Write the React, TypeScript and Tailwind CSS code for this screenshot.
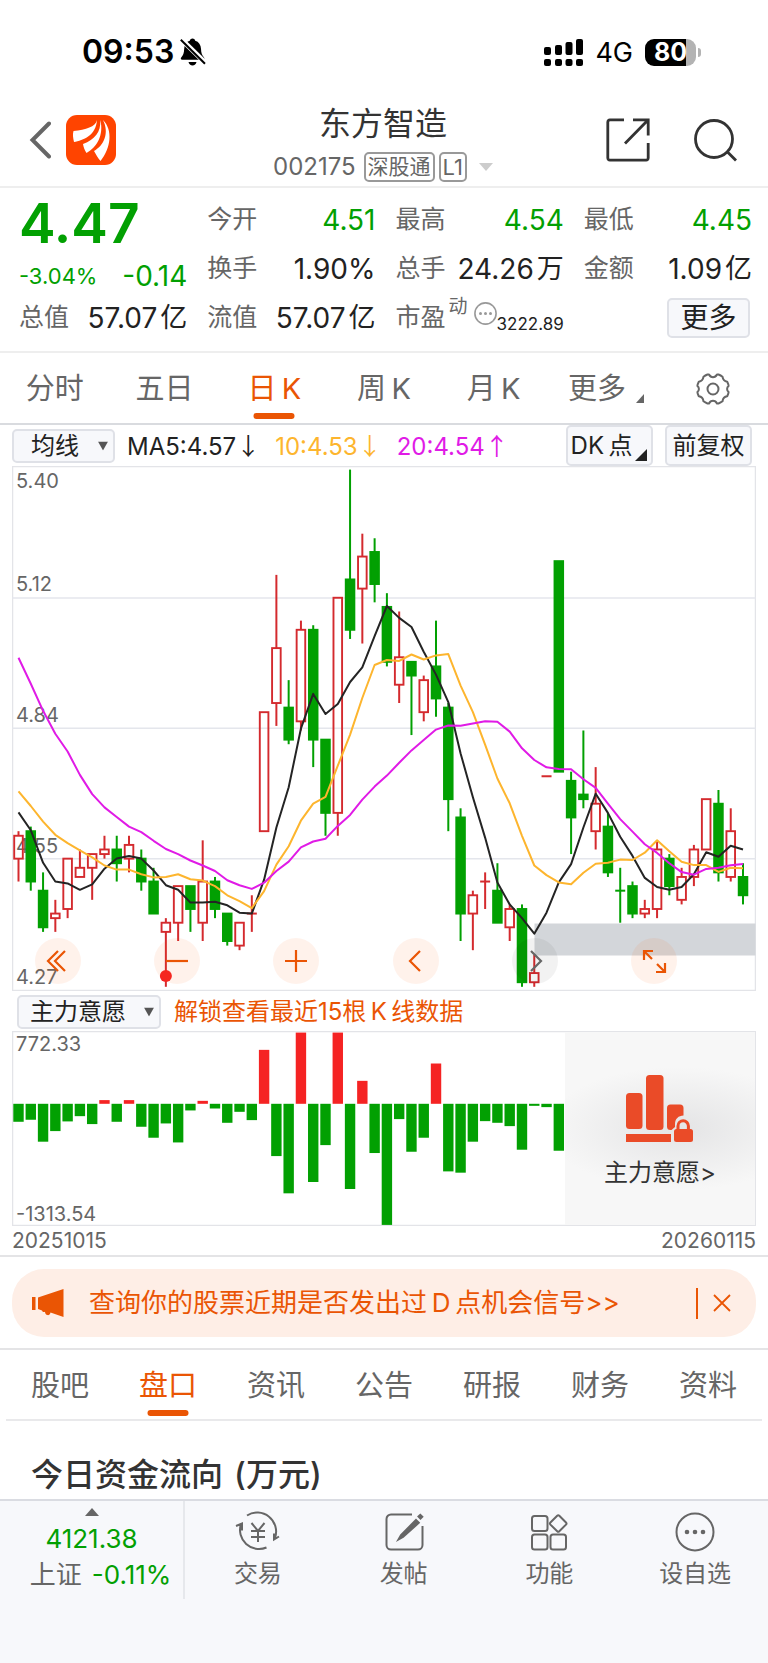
import React from "react";

type Candle = [up: boolean, high: number, top: number, bottom: number, low: number];

const R = true;
const G = false;

/* Prices in cents: direction, high, body top, body bottom, low */
const candles: Candle[] = [
  [R, 461, 460, 455, 450], [G, 462, 461, 450, 448], [G, 452, 448, 440, 439], [R, 446, 443, 442, 439],
  [R, 455, 455, 444, 442], [R, 457, 453, 451, 451], [R, 456, 456, 453, 446], [R, 460, 457, 456, 455],
  [G, 460, 457, 454, 450], [R, 460, 458, 455, 452], [G, 457, 455, 450, 448], [G, 453, 450, 443, 443],
  [R, 442, 441, 439, 427], [R, 449, 449, 441, 437], [G, 449, 449, 444, 439], [R, 459, 450, 441, 437],
  [G, 451, 450, 444, 442], [G, 443, 443, 437, 436], [R, 441, 441, 436, 435], [R, 447, 443, 443, 439],
  [R, 487, 487, 461, 461], [R, 517, 501, 489, 484], [G, 494, 488, 481, 480], [R, 507, 505, 485, 483],
  [G, 506, 505, 481, 475], [G, 481, 481, 465, 460], [R, 512, 512, 465, 460], [G, 540, 516, 505, 503],
  [R, 526, 521, 514, 502], [G, 525, 522, 515, 511], [G, 513, 510, 498, 497], [R, 509, 499, 493, 489],
  [G, 498, 498, 495, 482], [R, 495, 494, 487, 485], [G, 507, 497, 490, 486], [G, 489, 488, 468, 461],
  [G, 466, 464, 443, 437], [R, 448, 447, 443, 435], [R, 452, 450, 450, 444], [G, 454, 448, 441, 441],
  [R, 445, 444, 440, 437], [G, 445, 444, 428, 427], [R, 434, 430, 428, 427], [R, 473, 473, 473, 473],
  [G, 520, 520, 474, 474], [G, 474, 472, 464, 456], [G, 483, 469, 468, 466], [R, 475, 467, 461, 457],
  [G, 465, 462, 452, 451], [G, 453, 448, 448, 441], [G, 450, 449, 443, 442], [R, 446, 444, 443, 442],
  [R, 459, 457, 444, 442], [G, 456, 455, 449, 447], [R, 453, 451, 446, 445], [R, 458, 457, 451, 449],
  [R, 468, 468, 457, 457], [G, 470, 467, 452, 450], [R, 466, 461, 451, 450], [G, 454, 451, 447, 445],
];

const flows = [
  -195, -173, -411, -296, -191, -134, -220, 40, -195, 40, -249, -368, -213, -419, -72, 32, -51, -206, -87, -177,
  585, -567, -971, 772.33, -848, -448, 772.33, -924, 249, -534, -1313.54, -166, -520, -368, 437, -733, -747, -411,
  -188, -206, -242, -498, -22, -36, -509,
];

/* Averages of the days whose window starts before the first candle */
const seeds5 = [465.1, 461.2, 454.1, 450];
const seeds10 = [469.7, 466.5, 463.1, 460.2, 458.4, 456.8, 455.3, 453.5, 452.6];
const seeds20 = [
  498.9, 493.2, 487.3, 482.3, 478.4, 473.3, 469.1, 466.2, 464.1, 462, 460.8, 458.9, 457.1, 456, 454.6, 453.5, 452.3,
  450.3, 449.2,
];

const xOf = (i: number) => 6.5 + i * 12.28;
const yOf = (cents: number) => 3.6 + (540 - cents) * 4.577;

function average(n: number, seeds: number[]) {
  const closes = candles.map(([up, , top, bottom]) => (up ? top : bottom));
  return closes
    .map((_, i) => {
      const value = i < seeds.length ? seeds[i] : closes.slice(i - n + 1, i + 1).reduce((a, b) => a + b, 0) / n;
      return `${xOf(i).toFixed(1)},${yOf(value).toFixed(1)}`;
    })
    .join(" ");
}

function PriceChart() {
  const labels: [string, number][] = [["5.40", 22], ["5.12", 125], ["4.84", 256], ["4.55", 387], ["4.27", 518]];
  return (
    <svg viewBox="0 0 744 525" className="block h-auto w-full" role="img" aria-label="日K">
      <rect x="0.5" y="0.5" width="743" height="524" fill="none" stroke="#e3e4e8" strokeWidth="1.5" />
      {[132, 262.3, 392.8].map((y) => (
        <line key={y} x1="0" x2="744" y1={y} y2={y} stroke="#e4e6ec" strokeWidth="1.5" />
      ))}
      <rect x="522.5" y="457.5" width="221" height="32" fill="#d3d6da" />
      {labels.map(([text, y]) => (
        <text key={text} x="4" y={y} fill="#666" fontSize="20">{text}</text>
      ))}
      {candles.map(([up, high, top, bottom, low], i) => {
        const x = xOf(i);
        const color = up ? "#d42a2e" : "#02a002";
        if (top === bottom) {
          return (
            <g key={i} stroke={color} strokeWidth="2">
              <line x1={x - 5} x2={x + 5} y1={yOf(top)} y2={yOf(top)} />
              <line x1={x} x2={x} y1={yOf(high)} y2={yOf(low)} />
            </g>
          );
        }
        return (
          <g key={i} stroke={color}>
            <line x1={x} x2={x} y1={yOf(high)} y2={yOf(top)} strokeWidth="2" />
            <line x1={x} x2={x} y1={yOf(bottom)} y2={yOf(low)} strokeWidth="2" />
            <rect
              x={x - 4.3}
              y={yOf(top)}
              width="8.6"
              height={yOf(bottom) - yOf(top)}
              strokeWidth="1.9"
              fill={up ? "none" : color}
            />
          </g>
        );
      })}
      <g fill="none" strokeWidth="2" strokeLinejoin="round">
        <polyline points={average(5, seeds5)} stroke="#242424" />
        <polyline points={average(10, seeds10)} stroke="#fdb52e" />
        <polyline points={average(20, seeds20)} stroke="#e01be6" />
      </g>
      <circle cx={xOf(12)} cy="510" r="6" fill="#f52323" />
    </svg>
  );
}

function FlowChart() {
  return (
    <svg viewBox="0 0 744 195" className="block h-auto w-full" role="img" aria-label="主力意愿">
      <rect x="0.5" y="0.5" width="743" height="194" fill="none" stroke="#e3e4e8" strokeWidth="1.5" />
      {flows.map((v, i) => {
        const h = Math.abs(v) * 0.0922;
        return (
          <rect key={i} x={xOf(i) - 5.2} y={v > 0 ? 72.8 - h : 72.8} width="10.4" height={h} fill={v > 0 ? "#f52323" : "#02a002"} />
        );
      })}
      <text x="4" y="20" fill="#666" fontSize="20">772.33</text>
      <text x="4" y="190" fill="#666" fontSize="20">-1313.54</text>
    </svg>
  );
}

function StatusBar() {
  return (
    <div className="flex h-[104px] items-center justify-between pr-[67px] pl-[82px] text-black">
      <div className="flex items-center gap-1.5">
        <span className="text-[32px] leading-none font-semibold">09:53</span>
        <svg width="26" height="28" viewBox="0 0 26 28" aria-hidden="true">
          <path d="M12.5 0.5c1.6 0 2.5 1 2.7 2.2 3.6 1 5.6 4 5.8 8 .2 4.500 1 6.500 3 8.800.8 1 .4 2.200-1 2.200H2.200c-1.400 0-1.800-1.200-1-2.200 2-2.300 2.800-4.300 3-8.800.2-4 2-7 5.600-8C10 1.500 11 .5 12.500.5Z" fill="#000" />
          <path d="M8.500 24h8c-.5 2.200-2 3.500-4 3.500s-3.500-1.300-4-3.500Z" fill="#000" />
          <path d="M1.500 1.500 25 24.500" stroke="#fff" strokeWidth="5" />
          <path d="M0.800 1.800 25 25.800" stroke="#000" strokeWidth="2" />
        </svg>
      </div>
      <div className="flex items-center">
        <svg width="40" height="28" viewBox="0 0 40 28" aria-hidden="true">
          <rect x="0" y="9" width="7" height="8" rx="2" />
          <rect x="11" y="7" width="7" height="10" rx="2" />
          <rect x="21.500" y="4" width="7" height="13" rx="2" />
          <rect x="32" y="1" width="7" height="16" rx="2" />
          {[0, 11, 21.5, 32].map((x) => (
            <rect key={x} x={x} y="21" width="7" height="7" rx="2" />
          ))}
        </svg>
        <span className="ml-[11px] text-[27px] leading-none">4G</span>
        <div className="ml-3 flex h-[27px] w-[51px] items-center justify-center rounded-[9px] bg-linear-to-r from-black from-80% to-[#b3b3b3] to-80% text-[25px] leading-none font-bold text-white">
          80
        </div>
        <div className="ml-0.5 h-[9px] w-[3px] rounded-r-full bg-[#b3b3b3]" />
      </div>
    </div>
  );
}

function Header() {
  return (
    <header className="grid h-[84px] grid-cols-[1fr_auto_1fr] items-start border-b-2 border-[#eeeeee] pr-[31px] pl-[29px]">
      <div className="flex items-center gap-[15px] pt-[11px]">
        <button aria-label="返回">
          <svg width="22" height="38" viewBox="0 0 22 38" fill="none" stroke="#666" strokeWidth="4" strokeLinecap="round">
            <path d="M20 2.500 3.500 19 20 35.500" />
          </svg>
        </button>
        <svg width="50" height="50" viewBox="0 0 50 50" aria-hidden="true">
          <rect width="50" height="50" rx="11" fill="#ff4400" />
          <g fill="#fff">
            <path d="M31 5C29.500 12 20 14.500 7.500 16 6.500 19 7 23 8 27 17 25.500 30 20.500 31 5Z" />
            <path d="M34.300 5C35 17 29 24.500 17 29 17.500 32 18.500 35 20.500 38 31 32 38 20 34.300 5Z" />
            <path d="M37 5C43.500 18 38 30.500 28 36 30 39 31.500 43 34.500 46 45 33 47 15 37 5Z" />
          </g>
        </svg>
      </div>
      <div className="flex flex-col items-center">
        <h1 className="text-[32px] leading-10 text-[#333]">东方智造</h1>
        <button className="mt-2 flex h-[30px] items-center text-[#666]" aria-label="切换股票">
          <span className="mr-2 text-[24px]">002175</span>
          <span className="flex h-[30px] items-center rounded-[5px] border-2 border-[#999] px-0.5 text-[21px]">深股通</span>
          <span className="ml-1 flex h-[30px] items-center rounded-[5px] border-2 border-[#999] px-0.5 text-[22px]">L1</span>
          <svg className="ml-[12px]" width="14" height="8" viewBox="0 0 14 8" fill="#ccc" aria-hidden="true">
            <path d="M0 0h14L7 8Z" />
          </svg>
        </button>
      </div>
      <div className="flex items-center justify-end gap-[44px] pt-[14px]">
        <button aria-label="分享">
          <svg width="44" height="44" viewBox="0 0 44 44" fill="none" stroke="#333" strokeWidth="2.800">
            <path d="M18 1.800H4A2.400 2.400 0 0 0 1.800 4v36A2.400 2.400 0 0 0 4 42.200h36A2.400 2.400 0 0 0 42.200 40V25" />
            <path d="M27 1.800h15.200V17.500M42 2 19 25.500" />
          </svg>
        </button>
        <button aria-label="搜索">
          <svg width="43" height="43" viewBox="0 0 43 43" fill="none" stroke="#333" strokeWidth="2.800">
            <circle cx="20" cy="20" r="18.500" />
            <path d="m33 32.500 9 9" />
          </svg>
        </button>
      </div>
    </header>
  );
}

function Stat({ label, value, unit, green }: { label: string; value: string; unit?: string; green?: boolean }) {
  return (
    <div className="flex items-center justify-between whitespace-nowrap">
      <span className="text-[25px] text-[#666]">{label}</span>
      <span className={green ? "text-[28px] text-[#02a002]" : "flex items-center gap-[3px] text-[28px] text-[#222]"}>
        {value}
        {unit && <span className="text-[27px]">{unit}</span>}
      </span>
    </div>
  );
}

function Quote() {
  return (
    <section className="grid grid-cols-4 grid-rows-[49px_49px_49px] gap-x-[20px] border-b-2 border-[#eeeeee] pt-[7px] pr-[16px] pb-[9px] pl-[19px] leading-none">
      <div className="row-span-2 text-[#02a002]">
        <div className="flex h-[57px] items-center text-[55px] font-semibold">4.47</div>
        <div className="flex h-[48px] items-center justify-between">
          <span className="text-[22px]">-3.04%</span>
          <span className="text-[28px]">-0.14</span>
        </div>
      </div>
      <Stat label="今开" value="4.51" green />
      <Stat label="最高" value="4.54" green />
      <Stat label="最低" value="4.45" green />
      <Stat label="换手" value="1.90%" />
      <Stat label="总手" value="24.26" unit="万" />
      <Stat label="金额" value="1.09" unit="亿" />
      <Stat label="总值" value="57.07" unit="亿" />
      <Stat label="流值" value="57.07" unit="亿" />
      <div className="flex items-center whitespace-nowrap">
        <span className="text-[25px] text-[#666]">市盈</span>
        <span className="mb-[22px] ml-[3px] text-[19px] text-[#666]">动</span>
        <svg className="mb-[8px] ml-auto" width="23" height="23" viewBox="0 0 23 23" aria-hidden="true">
          <circle cx="11.500" cy="11.500" r="10.600" fill="none" stroke="#999" strokeWidth="1.600" />
          <g fill="#999">
            <circle cx="6.500" cy="11.500" r="1.500" />
            <circle cx="11.500" cy="11.500" r="1.500" />
            <circle cx="16.500" cy="11.500" r="1.500" />
          </g>
        </svg>
        <span className="mt-[14px] text-[17px] text-[#222]">3222.89</span>
      </div>
      <div className="flex items-center justify-end pr-[2px]">
        <button className="h-[40px] w-[83px] rounded-[5px] border-2 border-[#dfe1e7] bg-[#f7f8fb] text-[28px] leading-none text-[#222]">
          更多
        </button>
      </div>
    </section>
  );
}

function GearIcon() {
  return (
    <svg width="34" height="32" viewBox="0 0 34 32" fill="none" stroke="#666" strokeWidth="2" strokeLinejoin="round" aria-hidden="true">
      <path d="M11.500 1.500h1.500c1 2 2.500 2.700 4 2.700s3-.7 4-2.700h1.500c1.500.6 2.800 1.300 4 2.200.4 3 1.800 4.600 4.700 5 1 2 1.400 3.500 1.400 4.300-2 1.300-2 4.700 0 6 0 .8-.4 2.300-1.400 4.300-2.900.4-4.300 2-4.700 5-1.200.9-2.500 1.600-4 2.200H21c-1-2-2.500-2.700-4-2.700s-3 .7-4 2.700h-1.500c-1.500-.6-2.800-1.300-4-2.200-.4-3-1.800-4.600-4.700-5-1-2-1.400-3.500-1.400-4.300 2-1.300 2-4.700 0-6 0-.8.400-2.300 1.400-4.300 2.900-.4 4.300-2 4.700-5 1.200-.9 2.500-1.600 4-2.200Z" />
      <circle cx="17" cy="16" r="5.500" />
    </svg>
  );
}

function PeriodTabs() {
  const tabs = ["分时", "五日", "日K", "周K", "月K"];
  return (
    <nav className="grid h-[72px] grid-cols-7 border-b-2 border-[#d9dbdf] pt-px text-[29px] leading-none whitespace-nowrap text-[#666]">
      {tabs.map((t) =>
        t === "日K" ? (
          <button key={t} className="relative text-[#ea5504]" aria-current="true">
            日&thinsp;K
            <span className="absolute bottom-[4px] left-1/2 h-[6px] w-[41px] -translate-x-1/2 rounded-[3px] bg-[#ea5504]" />
          </button>
        ) : (
          <button key={t}>{t[1] === "K" ? <>{t[0]}&thinsp;K</> : t}</button>
        ),
      )}
      <button className="flex items-center justify-center gap-[10px] pl-[5px]">
        更多
        <svg className="mt-5" width="8" height="9" viewBox="0 0 8 9" fill="#666" aria-hidden="true">
          <path d="M8 0v9H0Z" />
        </svg>
      </button>
      <button className="flex items-center justify-center" aria-label="设置">
        <GearIcon />
      </button>
    </nav>
  );
}

function Picker({ label, options, className }: { label: string; options: string[]; className: string }) {
  return (
    <div className={className}>
      <select
        aria-label={label}
        className="h-full w-full appearance-none rounded-[5px] border-2 border-[#dfe1e7] bg-[#f7f8fb] leading-none text-[#222]"
      >
        {options.map((o) => (
          <option key={o}>{o}</option>
        ))}
      </select>
      <svg className="pointer-events-none absolute top-1/2 right-[7px] -translate-y-1/2" width="10" height="9" viewBox="0 0 10 9" fill="#555" aria-hidden="true">
        <path d="M0 0h10L5 9Z" />
      </svg>
    </div>
  );
}

function Average({ text, arrow, className }: { text: string; arrow: string; className: string }) {
  return (
    <span className={className}>
      {text}
      <span className="font-['Noto_Sans_CJK_SC',sans-serif]">{arrow}</span>
    </span>
  );
}

function AverageBar() {
  return (
    <div className="flex h-[41px] items-center px-[12px] text-[24px] leading-none whitespace-nowrap">
      <Picker label="主图指标" options={["均线"]} className="relative h-[34px] w-[103px] shrink-0 text-[24px] *:first:pl-[17px]" />
      <Average text="MA5:4.57" arrow="↓" className="ml-[12px] text-[#222]" />
      <Average text="10:4.53" arrow="↓" className="ml-[15px] text-[#fdb52e]" />
      <Average text="20:4.54" arrow="↑" className="ml-[15px] text-[#e01be6]" />
      <button className="relative ml-auto h-[41px] w-[87px] rounded-[5px] border-2 border-[#dfe1e7] bg-[#f7f8fb] pr-4 text-[24px] text-[#222]">
        DK&thinsp;点
        <svg className="absolute right-[4px] bottom-[3px]" width="12" height="12" viewBox="0 0 12 12" fill="#222" aria-hidden="true">
          <path d="M12 0v12H0Z" />
        </svg>
      </button>
      <button className="mr-[4px] ml-[12px] h-[41px] w-[87px] rounded-[5px] border-2 border-[#dfe1e7] bg-[#f7f8fb] text-[24px] text-[#222]">
        前复权
      </button>
    </div>
  );
}

function ChartTools() {
  const tools = [
    { name: "最早", d: "M23 13 13 23l10 10M30 13 20 23l10 10" },
    { name: "缩小", d: "M12 23h22" },
    { name: "放大", d: "M12 23h22M23 12v22" },
    { name: "向左", d: "M27 13 17 23l10 10" },
    { name: "向右", d: "M19 13l10 10-10 10" },
    { name: "全屏", d: "M13 22v-9h9M13 13l8 8M34 25v9h-9M34 34l-8-8" },
  ];
  return (
    <div className="absolute inset-x-0 bottom-[7px] flex justify-between pr-[79px] pl-[23px]">
      {tools.map(({ name, d }) => (
        <button
          key={name}
          aria-label={name}
          className={name === "向右" ? "rounded-full bg-black/5 text-[#666]" : "rounded-full bg-[#ff5500]/8 text-[#ea5504]"}
        >
          <svg width="46" height="46" viewBox="0 0 46 46" fill="none" stroke="currentColor" strokeWidth="2.200">
            <path d={d} />
          </svg>
        </button>
      ))}
    </div>
  );
}

function LockPanel() {
  return (
    <button className="absolute inset-y-px right-px flex w-[190px] flex-col items-center bg-[radial-gradient(ellipse_70%_32%_at_60%_50%,#e4e4e5,#f7f7f7)] pt-[43px] text-[#333]">
      <svg width="68" height="68" viewBox="0 0 68 68" fill="#ea4b28" aria-hidden="true">
        <rect x="0" y="18" width="16.500" height="36" rx="3.500" />
        <rect x="20" y="0" width="17.500" height="55" rx="3.500" />
        <path d="M44.500 29.500h9.500a3.500 3.500 0 0 1 3.500 3.500v7.500c-5 0-8.500 3.500-8.500 8.500v3l-3.500 3h-1a3.500 3.500 0 0 1-3.500-3.500V33a3.500 3.500 0 0 1 3.500-3.500Z" />
        <path d="M0 59h45v8H0Z" />
        <rect x="48" y="54" width="19" height="13" rx="2.500" />
        <path d="M52 55v-4a5.200 5.200 0 0 1 10.400 0v4" fill="none" stroke="#ea4b28" strokeWidth="3" />
      </svg>
      <span className="mt-[17px] text-[24px] leading-[26px]">主力意愿&gt;</span>
    </button>
  );
}

function Banner() {
  return (
    <aside className="mx-[12px] mt-[12px] mb-[11px] flex h-[68px] items-center rounded-[32px] bg-[#feeee6] pr-[25px] pl-[20px] text-[#ea5504]">
      <svg width="33" height="28" viewBox="0 0 33 28" fill="currentColor" aria-hidden="true">
        <path d="M0 8h3.500v13H0ZM6 8.500 31.500 0v28l-13-4.500c-.5 2-1.500 2.800-3 2.600-1.600-.2-2.400-1.500-2.500-3.300-1 .6-2.500.3-3-1.300L6 20Z" />
      </svg>
      <a href="#signals" className="ml-[24px] text-[26px] leading-none whitespace-nowrap">
        查询你的股票近期是否发出过&thinsp;D&thinsp;点机会信号&gt;&gt;
      </a>
      <span className="ml-auto h-[31px] w-[2px] bg-[#ea5504]" />
      <button className="ml-[15px]" aria-label="关闭">
        <svg width="18" height="18" viewBox="0 0 18 18" fill="none" stroke="currentColor" strokeWidth="1.800">
          <path d="m1 1 16 16M17 1 1 17" />
        </svg>
      </button>
    </aside>
  );
}

function InfoTabs() {
  return (
    <nav className="mx-[6px] grid h-[71px] grid-cols-7 border-b-2 border-[#e9e9eb] pt-[2px] text-[29px] leading-none text-[#666]">
      {["股吧", "盘口", "资讯", "公告", "研报", "财务", "资料"].map((t) =>
        t === "盘口" ? (
          <button key={t} className="relative text-[#ea5504]" aria-current="true">
            {t}
            <span className="absolute bottom-[3px] left-1/2 h-[6px] w-[41px] -translate-x-1/2 rounded-[3px] bg-[#ea5504]" />
          </button>
        ) : (
          <button key={t}>{t}</button>
        ),
      )}
    </nav>
  );
}

function NavItem({ label, children }: { label: string; children: React.ReactNode }) {
  return (
    <button className="flex flex-1 flex-col items-center pt-[10px]">
      <svg width="46" height="42" viewBox="0 0 46 42" fill="none" stroke="#666" strokeWidth="2" aria-hidden="true">
        {children}
      </svg>
      <span className="mt-[7px] text-[24px] leading-[28px]">{label}</span>
    </button>
  );
}

function BottomBar() {
  return (
    <footer className="flex flex-1 items-start border-t-2 border-[#dadce2] bg-[#f7f8fb] pb-[64px] text-[#666]">
      <button className="flex h-[98px] w-[185px] flex-col items-center border-r-2 border-[#e6e8ec] pt-[7px] leading-none">
        <svg width="14" height="8" viewBox="0 0 14 8" fill="#666" aria-hidden="true">
          <path d="M7 0l7 8H0Z" />
        </svg>
        <span className="mt-[9px] text-[26px] leading-[28px] text-[#02a002]">4121.38</span>
        <span className="mt-[6px] flex items-center gap-[10px] pl-[18px] text-[26px] leading-[32px] whitespace-nowrap">
          上证 <span className="text-[#02a002]">-0.11%</span>
        </span>
      </button>
      <NavItem label="交易">
        <path d="M12 4.500A19 19 0 0 1 40 27M31.500 36.500A19 19 0 0 1 6 13M1 15l6-2.500v7M44 25.500l-5 3v-6" />
        <path d="m16.500 12 6.500 8 6.500-8M16 20h14M16 26h14M23 20v11" />
      </NavItem>
      <NavItem label="发帖">
        <path d="M31 3.500H10a4.500 4.500 0 0 0-4.500 4.500v26A4.500 4.500 0 0 0 10 38.500h27a4.500 4.500 0 0 0 4.500-4.500V15" />
        <path d="m35 9 2.800 2.800L22 26l-4.500 2.500L20 24ZM37.500 5.500l1.800-1.700 2 2-1.800 1.700Z" fill="#666" />
      </NavItem>
      <NavItem label="功能">
        <rect x="6" y="5" width="15.500" height="15" rx="2.500" />
        <rect x="6" y="23.500" width="15.500" height="15" rx="2.500" />
        <rect x="24.500" y="23.500" width="15.500" height="15" rx="2.500" />
        <path d="m31.200 4.800-6.800 6.700a1.500 1.500 0 0 0 0 2.100l6.800 6.700a1.500 1.500 0 0 0 2.100 0l6.700-6.700a1.500 1.500 0 0 0 0-2.100l-6.700-6.700a1.500 1.500 0 0 0-2.100 0Z" />
      </NavItem>
      <NavItem label="设自选">
        <circle cx="23" cy="21" r="18.500" />
        <g fill="#666" stroke="none">
          <circle cx="15" cy="21" r="2.300" />
          <circle cx="23" cy="21" r="2.300" />
          <circle cx="31" cy="21" r="2.300" />
        </g>
      </NavItem>
    </footer>
  );
}

export default function App() {
  return (
    <div className="flex min-h-screen flex-col bg-white font-['Inter','Noto_Sans_CJK_SC',sans-serif]">
      <StatusBar />
      <Header />
      <Quote />
      <PeriodTabs />
      <AverageBar />
      <div className="relative mx-[12px]">
        <PriceChart />
        <ChartTools />
      </div>
      <div className="flex h-[40px] items-center pt-px pl-[17px] leading-none whitespace-nowrap">
        <Picker label="副图指标" options={["主力意愿"]} className="relative h-[34px] w-[144px] shrink-0 text-[24px] *:first:pl-[11px]" />
        <span className="ml-[13px] text-[24px] text-[#ea5504]">解锁查看最近15根&thinsp;K&thinsp;线数据</span>
      </div>
      <div className="relative mx-[12px]">
        <FlowChart />
        <LockPanel />
      </div>
      <div className="flex h-[31px] items-center justify-between border-b-2 border-[#e4e4e6] px-[12px] text-[21px] leading-none text-[#666]">
        <span>20251015</span>
        <span>20260115</span>
      </div>
      <Banner />
      <div className="border-t-2 border-[#e4e4e6]">
        <InfoTabs />
      </div>
      <h2 className="flex h-[78px] items-center px-[31px] pt-[29px] text-[32px] leading-none font-medium text-[#333]">
        今日资金流向&thinsp;&thinsp;(万元)
      </h2>
      <BottomBar />
    </div>
  );
}
